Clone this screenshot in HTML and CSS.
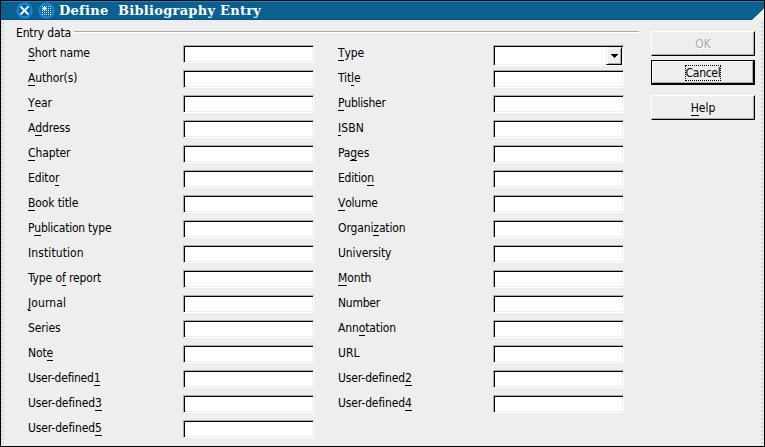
FILE: index.html
```
<!DOCTYPE html>
<html lang="en">
<head>
<meta charset="utf-8">
<title>Define Bibliography Entry</title>
<link rel="stylesheet" href="styles.css">
</head>
<body>
<div class="window">
  <header class="titlebar">
    <svg class="icons" width="46" height="19" viewBox="0 0 46 19">
      <circle cx="8.500" cy="9.5" r="8" fill="#1689db"/><circle cx="8.500" cy="9.5" r="6" fill="#0b5f9d"/>
      <path d="M4.500 5.5 12.500 13.500M12.500 5.5 4.500 13.500" stroke="#fff" stroke-width="1.8"/>
      <circle cx="30.500" cy="9.5" r="8" fill="#1689db"/><circle cx="30.500" cy="9.5" r="6" fill="#0b67ad"/>
      <path d="M26 5.5h10M26 7.5h10M26 9.5h10M26 11.5h10M26 13.500h10" stroke="#fff" stroke-dasharray="1 1"/>
      <path d="M26 7.500h5M28.500 5v5M27.500 6.500h2v2h-2z" stroke="#fff" fill="#fff"/>
    </svg>
    <h1>Define&nbsp; Bibliography Entry</h1>
    <svg class="corner" width="12" height="11" viewBox="0 0 12 11"><path d="M12 0V11H0z" fill="#eee"/><path d="M12 0 1 11" stroke="#fff"/></svg>
  </header>
  <main class="content">
    <section class="entry">
      <div class="legend"><span>Entry data</span><i></i></div>
      <div class="columns">
        <div class="column">
          <label><span><u>S</u>hort name</span><input></label>
          <label><span><u>A</u>uthor(s)</span><input></label>
          <label><span><u>Y</u>ear</span><input></label>
          <label><span>A<u>d</u>dress</span><input></label>
          <label><span><u>C</u>hapter</span><input></label>
          <label><span>Edito<u>r</u></span><input></label>
          <label><span><u>B</u>ook title</span><input></label>
          <label><span class="tight">P<u>u</u>blication type</span><input></label>
          <label><span class="loose">Institution</span><input></label>
          <label><span>Type o<u>f</u> report</span><input></label>
          <label><span class="loose"><u>J</u>ournal</span><input></label>
          <label><span>Series</span><input></label>
          <label><span>Not<u>e</u></span><input></label>
          <label><span class="tight">User-defined<u>1</u></span><input></label>
          <label><span>User-defined<u>3</u></span><input></label>
          <label><span>User-defined<u>5</u></span><input></label>
        </div>
        <div class="column">
          <label><span><u>T</u>ype</span><div class="combo"><div class="arrow"><svg width="7" height="4" viewBox="0 0 7 4"><path d="M0 0h7v1H6v1H5v1H4v1H3V3H2V2H1V1H0z"/></svg></div></div></label>
          <label><span>Tit<u>l</u>e</span><input></label>
          <label><span class="tight"><u>P</u>ublisher</span><input></label>
          <label><span class="loose"><u>I</u>SBN</span><input></label>
          <label><span>Pa<u>g</u>es</span><input></label>
          <label><span class="tight">Editio<u>n</u></span><input></label>
          <label><span class="tight"><u>V</u>olume</span><input></label>
          <label><span>Organi<u>z</u>ation</span><input></label>
          <label><span>University</span><input></label>
          <label><span><u>M</u>onth</span><input></label>
          <label><span class="tight">Number</span><input></label>
          <label><span>Ann<u>o</u>tation</span><input></label>
          <label><span class="loose">URL</span><input></label>
          <label><span>User-defined<u>2</u></span><input></label>
          <label><span>User-defined<u>4</u></span><input></label>
        </div>
      </div>
    </section>
    <aside class="actions">
      <button class="disabled" disabled>OK</button>
      <button class="default"><span>Cancel</span></button>
      <button class="help"><u>H</u>elp</button>
    </aside>
  </main>
</div>
</body>
</html>
```
FILE: styles.css
```
* { box-sizing: border-box; }
body { margin: 0; }
.window {
  width: 765px; height: 447px; border: 1px solid #000;
  background: #eee; display: flex; flex-direction: column;
  font: 12px/14px "DejaVu Sans Condensed", sans-serif; color: #000;
}
.titlebar {
  height: 19px; flex: none; display: flex; align-items: center;
  padding-left: 15px; border-top: 1px solid #2180b5; border-bottom: 1px solid #064d78;
  background: repeating-linear-gradient(#0d6595 0 1px, #075c8c 1px 2px);
}
.icons { flex: none; }
h1 {
  margin: 0; color: #fff; white-space: nowrap; letter-spacing: 0.27px;
  font: bold 13px/17px "DejaVu Serif", serif; width: 204px; margin-left: -3px;
}
.corner { margin-left: auto; align-self: flex-end; margin-bottom: -1px; }
.content {
  flex: 1; display: flex; margin: 0 3px; padding-left: 12px;
  position: relative; min-height: 0;
}
.content::before, .content::after {
  content: ""; position: absolute; top: 0; bottom: 0; width: 3px; left: -3px;
  background: repeating-linear-gradient(#eee 0 2px, #ddd7d7 2px 4px);
}
.content::after { left: auto; right: -3px; }
.entry { width: 623px; }
.legend { display: flex; height: 14px; margin-top: 6px; padding: 0; gap: 3px; letter-spacing: -0.15px; }
.legend i { flex: 1; height: 2px; margin-top: 5px; background: linear-gradient(#aaa 50%, #fff 50%); }
.columns { display: flex; gap: 24px; padding-left: 12px; margin-top: 5px; }
.column { width: 286px; }
label { display: flex; height: 25px; align-items: flex-start; justify-content: space-between; }
label span { white-space: nowrap; margin-top: 1px; letter-spacing: -0.12px; }
label .tight { letter-spacing: -0.23px; }
label .loose { letter-spacing: 0.1px; }
u { text-decoration: none; box-shadow: 0 1px 0 #000; display: inline-block; height: 14px; }
input, .combo {
  width: 131px; height: 18px; padding: 0; outline: 0; flex: none;
  border: 1px solid; border-color: #aaa #fff #fff #aaa; border-radius: 0;
  background: #fff; box-shadow: inset 1px 1px #000, inset -1px -1px #eee;
}
.combo { height: 21px; display: flex; justify-content: flex-end; padding: 1px; }
.arrow {
  width: 16px; height: 18px; display: flex; align-items: center; justify-content: center;
  background: #eee; border: 1px solid; border-color: #eee #000 #000 #eee;
  box-shadow: inset 1px 1px #fff, inset -1px -1px #aaa;
}
.actions { margin: 11px 0 0 12px; width: 104px; display: flex; flex-direction: column; }
button {
  font: inherit; height: 25px; width: 104px; padding: 0; border-radius: 0; color: #000;
  border: 1px solid; border-color: #fff #000 #000 #fff; background: #eee;
  box-shadow: inset -1px -1px #aaa;
}
.disabled { color: #aaa; text-shadow: 1px 1px #fff; }
.default {
  margin-top: 4px; border: 1px solid #000; letter-spacing: -0.3px;
  box-shadow: inset -1px -1px #000, inset 1px 1px #fff, inset -2px -2px #aaa;
}
.default span { outline: 1px dotted #000; display: inline-block; height: 14px; }
.help { margin-top: 10px; }
```
